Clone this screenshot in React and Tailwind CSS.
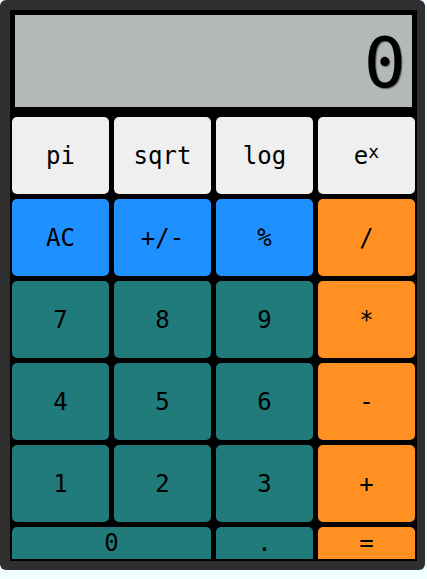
import React from "react";

const mono = { fontFamily: '"DejaVu Sans Mono", monospace' };

function Key({ children, className = "" }) {
  return (
    <div
      className={`flex items-center justify-center rounded-[5px] text-[24px] text-black ${className}`}
      style={mono}
    >
      {children}
    </div>
  );
}

export default function App() {
  const light = "bg-[#efefef]";
  const blue = "bg-[#1e90ff]";
  const teal = "bg-[#217b7b]";
  const orange = "bg-[#ff9021]";
  return (
    <div className="min-h-[579px] w-[427px] bg-[#f0ffff]">
      <div className="h-[570px] w-[425px] rounded-[6px] bg-[#2f2f2f] pl-[10px] pt-[10px]">
        <div className="flex w-[407px] flex-col bg-black">
          <div className="flex h-[102px] items-center justify-end border-[5px] border-black bg-[#b3b9b6] pr-[6px] pt-[4px]">
            <span
              className="text-[70px] leading-none text-black [text-shadow:1px_1px_1px_#5a605d]"
              style={mono}
            >
              0
            </span>
          </div>
          <div className="grid grid-cols-4 gap-[5px] px-[2px] pb-[2px] pt-[5px] [grid-template-rows:repeat(5,77px)_32px]">
            <Key className={light}>pi</Key>
            <Key className={light}>sqrt</Key>
            <Key className={light}>log</Key>
            <Key className={light}>
              e<sup className="relative top-[-4px] text-[18px]">x</sup>
            </Key>
            <Key className={blue}>AC</Key>
            <Key className={blue}>+/-</Key>
            <Key className={blue}>%</Key>
            <Key className={orange}>/</Key>
            <Key className={teal}>7</Key>
            <Key className={teal}>8</Key>
            <Key className={teal}>9</Key>
            <Key className={orange}>*</Key>
            <Key className={teal}>4</Key>
            <Key className={teal}>5</Key>
            <Key className={teal}>6</Key>
            <Key className={orange}>-</Key>
            <Key className={teal}>1</Key>
            <Key className={teal}>2</Key>
            <Key className={teal}>3</Key>
            <Key className={orange}>+</Key>
            <Key className={`${teal} col-span-2 rounded-b-none`}>0</Key>
            <Key className={`${teal} rounded-b-none`}>.</Key>
            <Key className={`${orange} rounded-b-none`}>=</Key>
          </div>
        </div>
      </div>
    </div>
  );
}
